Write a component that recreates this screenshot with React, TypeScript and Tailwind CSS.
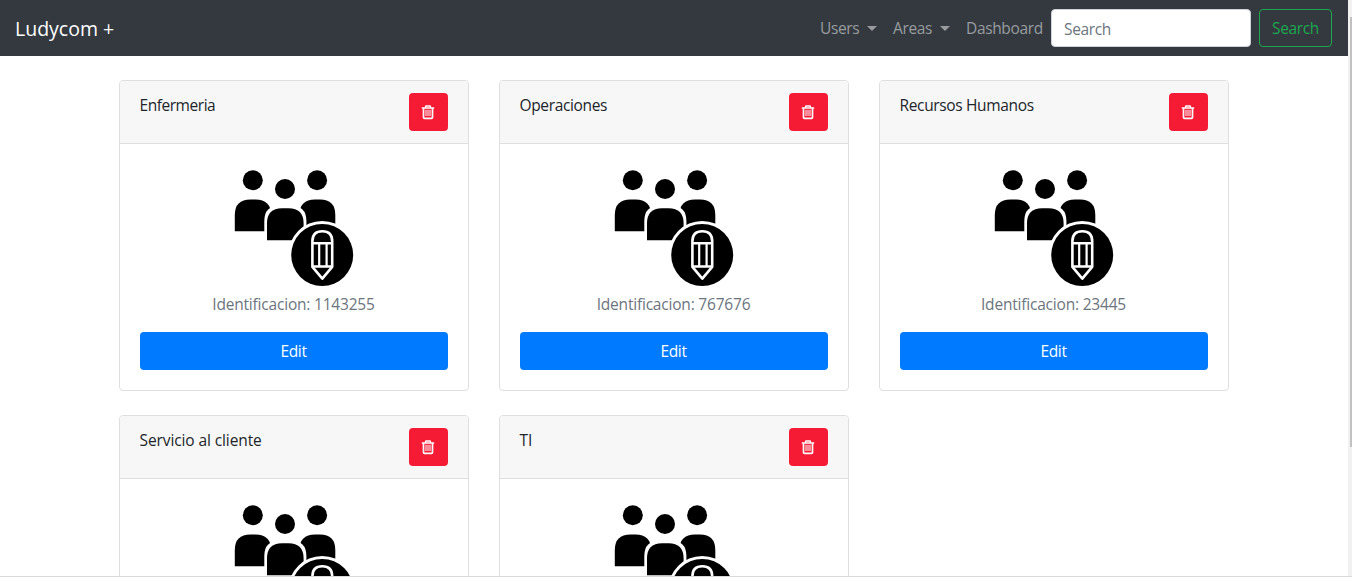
import React from "react";

type Area = { name: string; id?: string; tracking: string };

const areas: Area[] = [
  { name: "Enfermeria", id: "1143255", tracking: "tracking-[-0.45px]" },
  { name: "Operaciones", id: "767676", tracking: "tracking-[-0.35px]" },
  { name: "Recursos Humanos", id: "23445", tracking: "tracking-[-0.35px]" },
  { name: "Servicio al cliente", tracking: "tracking-[-0.1px]" },
  { name: "TI", tracking: "tracking-[-0.1px]" },
];

function TrashIcon() {
  return (
    <svg className="mr-px" width="14" height="16" viewBox="0 0 14 16" fill="none" stroke="#fff">
      <path d="M0.8 4H13.2" strokeWidth="1.6" />
      <path d="M4.2 3.8L5 1.9H9L9.8 3.8" strokeWidth="1.5" />
      <path d="M2.5 4.2V13.4Q2.5 14.3 3.4 14.3H10.6Q11.5 14.3 11.5 13.4V4.2" strokeWidth="1.7" />
      <path d="M5 5.8V12M7 5.8V12M9 5.8V12" strokeWidth="1" />
    </svg>
  );
}

function TeamIcon() {
  return (
    <svg className="mx-auto block h-32 w-32" viewBox="5 4 128 128">
      <circle cx="27.8" cy="20.2" r="10" />
      <circle cx="92.1" cy="20.2" r="10" />
      <circle cx="60" cy="29" r="10" />
      <path d="M9.8 71.3V55Q9.8 39.5 25.5 39.5H30.5Q46 39.5 46 55V71.3Z" />
      <path d="M74.5 71.3V55Q74.5 39.5 90 39.5H95Q110.3 39.5 110.3 55V71.3Z" />
      <path d="M39.3 82V61Q39.3 45.5 55 45.5H65.5Q81.4 45.5 81.4 61V82Z" fill="#fff" />
      <path d="M42 80.2V63.5Q42 48.3 57 48.3H63.5Q78.6 48.3 78.6 63.5V80.2Z" />
      <circle cx="97.2" cy="95" r="34" fill="#fff" />
      <circle cx="97.2" cy="95" r="31" />
      <g fill="none" stroke="#fff" strokeWidth="2.6" strokeLinejoin="round">
        <path d="M87.4 106.8V81.2Q87.4 71.2 97.3 71.2Q107.2 71.2 107.2 81.2V106.8L97.3 118.6Z" />
        <path d="M87.4 83.3H107.2M87.4 106.5H107.2" strokeWidth="2.4" />
        <path d="M94.2 83.5V106.5M101.6 83.5V106.5" strokeWidth="2.2" />
      </g>
    </svg>
  );
}

function NavDropdown({ label, className }: { label: string; className: string }) {
  return (
    <a className={`flex items-center p-2 ${className}`}>
      {label}
      <svg className="mb-0.5 ml-auto" width="10" height="5" viewBox="0 0 10 5" fill="#999c9f">
        <path d="M0 0H10L5 5Z" />
      </svg>
    </a>
  );
}

function AreaCard({ area }: { area: Area }) {
  return (
    <article className="h-[311px] overflow-hidden rounded border border-[#dfdfdf] bg-white">
      <header className="flex h-[63px] items-start justify-between border-b border-[#dfdfdf] bg-[#f7f7f7] pt-3 pr-5 pl-[19.5px]">
        <span className={`leading-6 text-[#212529] ${area.tracking}`}>{area.name}</span>
        <button aria-label="Delete" className="flex h-[38px] w-[39px] items-center justify-center rounded bg-[#f61b35]">
          <TrashIcon />
        </button>
      </header>
      <div className="p-5">
        <TeamIcon />
        {area.id && (
          <>
            <p className="mb-4 pr-px text-center leading-6 tracking-[-0.2px] text-[#6c757d]">
              Identificacion: {area.id}
            </p>
            <button className="h-[38px] w-full rounded bg-[#007bff] pt-0.5 pr-px text-white">Edit</button>
          </>
        )}
      </div>
    </article>
  );
}

export default function App() {
  return (
    <div className="h-[581px] overflow-hidden bg-white font-['Open_Sans','Noto_Sans',sans-serif] text-[15.5px] tracking-[-0.35px]">
      <div className="flex h-[577px] overflow-hidden border-b border-[#d9d9d9]">
        <main className="min-w-0 flex-1">
          <nav className="flex h-14 items-center bg-[#33393f] pr-4 pl-[15px]">
            <a className="mt-0.5 mr-auto text-[19.5px] leading-[30px] tracking-[0px] text-white">Ludycom +</a>
            <div className="flex items-center pt-0.5 text-[#999c9f]">
              <NavDropdown label="Users" className="w-[73px]" />
              <NavDropdown label="Areas" className="w-[73px]" />
              <a className="w-[93px] p-2 whitespace-nowrap">Dashboard</a>
            </div>
            <input
              placeholder="Search"
              className="mr-2 h-[38px] w-[200px] rounded border border-[#ced4da] bg-white px-3 pt-0.5 placeholder:text-[#6c757d]"
            />
            <button className="h-[38px] w-[73px] rounded border border-[#1ca750] pt-0.5 text-[#1ca750]">Search</button>
          </nav>
          <section className="grid grid-cols-[350px_350px_350px] gap-x-[30px] gap-y-6 pt-6 pl-[119px]">
            {areas.map((area) => (
              <AreaCard key={area.name} area={area} />
            ))}
          </section>
        </main>
        <aside className="w-1 shrink-0 bg-[#f1f1f1] pt-[17px]">
          <div className="ml-auto h-[430px] w-0.5 bg-[#c1c1c1]" />
        </aside>
      </div>
    </div>
  );
}
